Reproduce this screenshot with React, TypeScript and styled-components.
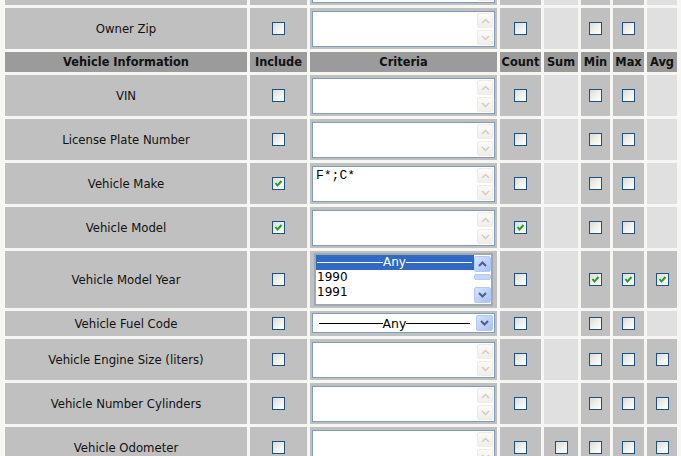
import React from 'react';
import styled, { createGlobalStyle } from 'styled-components';

const Global = createGlobalStyle`
  html, body { margin: 0; padding: 0; background: #f6f6f2; overflow: hidden; }
`;

const Page = styled.div`
  padding-left: 2px;
  margin-top: -39px;
`;

const Table = styled.table`
  border-collapse: separate;
  border-spacing: 3px;
  table-layout: fixed;
  width: 678px;
  font-family: "DejaVu Sans", Verdana, sans-serif;
  font-size: 11.7px;
  color: #111;
`;

const Col = styled.col<{ $w: number }>`
  width: ${(p) => p.$w}px;
`;

const Row = styled.tr<{ $h: number }>`
  height: ${(p) => p.$h}px;
`;

const HeadCell = styled.th`
  background: #9b9b9b;
  font-weight: bold;
  font-size: 11.4px;
  text-align: center;
  vertical-align: middle;
  padding: 0;
  color: #111;
  white-space: nowrap;
`;

const LabelCell = styled.td`
  background: #c0c0c0;
  text-align: center;
  vertical-align: middle;
  padding: 0;
  white-space: nowrap;
`;

const CheckCell = styled.td<{ $empty?: boolean }>`
  background: ${(p) => (p.$empty ? '#e0e0e0' : '#c0c0c0')};
  vertical-align: middle;
  padding: 0;
`;

const CriteriaCell = styled.td<{ $pad: string }>`
  background: #c0c0c0;
  vertical-align: top;
  padding: ${(p) => p.$pad};
`;

const Box = styled.span`
  display: block;
  margin: 0 auto;
  width: 13px;
  height: 13px;
  box-sizing: border-box;
  border: 1px solid #1c5180;
  background: linear-gradient(135deg, #dcdcd7 0%, #f4f4f0 60%, #ffffff 100%);
  position: relative;
`;

const CheckSvg = styled.svg`
  position: absolute;
  left: 0;
  top: 0;
`;

const Checkbox = ({ checked }: { checked?: boolean }) => (
  <Box>
    {checked && (
      <CheckSvg width="11" height="11" viewBox="0 0 11 11">
        <polyline points="2.5,5 4.5,7.5 8.5,3" fill="none" stroke="#21a121" strokeWidth="2" />
      </CheckSvg>
    )}
  </Box>
);

const TextBox = styled.div`
  height: 36px;
  box-sizing: border-box;
  border: 1px solid #7f9db9;
  background: #fff;
  display: flex;
`;

const TextContent = styled.div`
  flex: 1;
  padding: 2px 3px;
  font-family: "Liberation Mono", "Courier New", monospace;
  font-size: 13px;
  line-height: 14px;
  color: #000;
`;

const ScrollBar = styled.div`
  width: 17px;
  display: flex;
  flex-direction: column;
  gap: 2px;
  padding: 1px 1px 1px 0;
  box-sizing: border-box;
`;

const DisabledBtn = styled.div`
  flex: 1;
  border: 1px solid #eeede5;
  border-radius: 2px;
  background: linear-gradient(180deg, #fbfbf8, #f0efe8);
  display: flex;
  align-items: center;
  justify-content: center;
`;

const BlueBtn = styled.div<{ $h?: number }>`
  height: ${(p) => (p.$h ? `${p.$h}px` : 'auto')};
  width: 17px;
  flex: ${(p) => (p.$h ? 'none' : '1')};
  box-sizing: border-box;
  border: 1px solid #b4c8f6;
  border-radius: 2px;
  background: linear-gradient(135deg, #d6e3fe 0%, #c0d3fb 50%, #a7bff2 100%);
  display: flex;
  align-items: center;
  justify-content: center;
`;

const Chevron = ({ up, color, w = 2 }: { up?: boolean; color: string; w?: number }) => (
  <svg width="9" height="6" viewBox="0 0 9 6">
    <polyline
      points={up ? '1,5 4.5,1.5 8,5' : '1,1 4.5,4.5 8,1'}
      fill="none"
      stroke={color}
      strokeWidth={w}
    />
  </svg>
);

const TextArea = ({ value }: { value?: string }) => (
  <TextBox>
    <TextContent>{value}</TextContent>
    <ScrollBar>
      <DisabledBtn>
        <Chevron up color="#cfcec6" w={1.5} />
      </DisabledBtn>
      <DisabledBtn>
        <Chevron color="#cfcec6" w={1.5} />
      </DisabledBtn>
    </ScrollBar>
  </TextBox>
);

const ListBox = styled.div`
  height: 53px;
  margin: 0 2px 0 2px;
  box-sizing: border-box;
  border: 2px solid #a0a8b2;
  background: #fff;
  display: flex;
  overflow: hidden;
`;

const Options = styled.div`
  flex: 1;
  display: flex;
  flex-direction: column;
  font-family: "DejaVu Sans", Tahoma, sans-serif;
  font-size: 12px;
  color: #000;
`;

const Option = styled.div<{ $sel?: boolean }>`
  height: 15px;
  line-height: 15px;
  padding: 0 2px 0 1px;
  background: ${(p) => (p.$sel ? '#316ac5' : 'transparent')};
  color: ${(p) => (p.$sel ? '#fff' : '#000')};
  display: flex;
  align-items: center;
`;

const Rule = styled.span<{ $c: string }>`
  flex: 1;
  height: 0;
  border-top: 1px solid ${(p) => p.$c};
`;

const ListScroll = styled.div`
  width: 17px;
  display: flex;
  flex-direction: column;
  gap: 1px;
  padding: 1px 0 1px 0;
  box-sizing: border-box;
`;

const Thumb = styled.div`
  height: 6px;
  box-sizing: border-box;
  border: 1px solid #b4c8f6;
  border-radius: 2px;
  background: #c8d6fb;
  margin-top: 1px;
`;

const Gap = styled.div`
  flex: 1;
`;

const SelectBox = styled.div`
  height: 20px;
  box-sizing: border-box;
  border: 1px solid #7f9db9;
  background: #fff;
  display: flex;
  padding: 1px;
`;

const SelectValue = styled.div`
  flex: 1;
  display: flex;
  align-items: center;
  padding: 0 6px 0 5px;
  font-family: "DejaVu Sans", Tahoma, sans-serif;
  font-size: 12.5px;
  color: #000;
`;

const AnyText = styled.span`
  padding: 0;
`;

type Kind = 'text' | 'list' | 'select';
type RowData = {
  label: string;
  include?: boolean;
  kind: Kind;
  value?: string;
  count?: boolean;
  sum?: boolean | null;
  min?: boolean | null;
  max?: boolean | null;
  avg?: boolean | null;
  h: number;
};

const before: RowData[] = [
  { label: '', kind: 'text', count: false, sum: null, min: false, max: false, avg: null, h: 41 },
  { label: 'Owner Zip', kind: 'text', count: false, sum: null, min: false, max: false, avg: null, h: 41 },
];

const after: RowData[] = [
  { label: 'VIN', kind: 'text', count: false, sum: null, min: false, max: false, avg: null, h: 41 },
  { label: 'License Plate Number', kind: 'text', count: false, sum: null, min: false, max: false, avg: null, h: 41 },
  { label: 'Vehicle Make', include: true, kind: 'text', value: 'F*;C*', count: false, sum: null, min: false, max: false, avg: null, h: 41 },
  { label: 'Vehicle Model', include: true, kind: 'text', count: true, sum: null, min: false, max: false, avg: null, h: 41 },
  { label: 'Vehicle Model Year', kind: 'list', count: false, sum: null, min: true, max: true, avg: true, h: 57 },
  { label: 'Vehicle Fuel Code', kind: 'select', count: false, sum: null, min: false, max: false, avg: null, h: 25 },
  { label: 'Vehicle Engine Size (liters)', kind: 'text', count: false, sum: null, min: false, max: false, avg: false, h: 41 },
  { label: 'Vehicle Number Cylinders', kind: 'text', count: false, sum: null, min: false, max: false, avg: false, h: 41 },
  { label: 'Vehicle Odometer', kind: 'text', count: false, sum: false, min: false, max: false, avg: false, h: 41 },
];

const AnyLine = ({ c }: { c: string }) => (
  <>
    <Rule $c={c} />
    <AnyText>Any</AnyText>
    <Rule $c={c} />
  </>
);

const Criteria = ({ r }: { r: RowData }) => {
  if (r.kind === 'list') {
    return (
      <CriteriaCell $pad="2px 2px 0 2px">
        <ListBox>
          <Options>
            <Option $sel>
              <AnyLine c="#fff" />
            </Option>
            <Option>1990</Option>
            <Option>1991</Option>
          </Options>
          <ListScroll>
            <BlueBtn $h={16}>
              <Chevron up color="#4d6185" />
            </BlueBtn>
            <Thumb />
            <Gap />
            <BlueBtn $h={16}>
              <Chevron color="#4d6185" />
            </BlueBtn>
          </ListScroll>
        </ListBox>
      </CriteriaCell>
    );
  }
  if (r.kind === 'select') {
    return (
      <CriteriaCell $pad="2px 2px 0 2px">
        <SelectBox>
          <SelectValue>
            <AnyLine c="#000" />
          </SelectValue>
          <BlueBtn $h={16}>
            <Chevron color="#4d6185" />
          </BlueBtn>
        </SelectBox>
      </CriteriaCell>
    );
  }
  return (
    <CriteriaCell $pad="3px 2px 0 2px">
      <TextArea value={r.value} />
    </CriteriaCell>
  );
};

const Agg = ({ v }: { v?: boolean | null }) =>
  v === null || v === undefined ? <CheckCell $empty /> : (
    <CheckCell>
      <Checkbox checked={v} />
    </CheckCell>
  );

const DataRow = ({ r }: { r: RowData }) => (
  <Row $h={r.h}>
    <LabelCell>{r.label}</LabelCell>
    <CheckCell>
      <Checkbox checked={r.include} />
    </CheckCell>
    <Criteria r={r} />
    <CheckCell>
      <Checkbox checked={r.count} />
    </CheckCell>
    <Agg v={r.sum} />
    <Agg v={r.min} />
    <Agg v={r.max} />
    <Agg v={r.avg} />
  </Row>
);

export default function App() {
  return (
    <>
      <Global />
      <Page>
        <Table>
          <colgroup>
            <Col $w={242} />
            <Col $w={57} />
            <Col $w={187} />
            <Col $w={41} />
            <Col $w={34} />
            <Col $w={29} />
            <Col $w={31} />
            <Col $w={30} />
          </colgroup>
          <tbody>
            {before.map((r, i) => (
              <DataRow key={i} r={r} />
            ))}
            <Row $h={20}>
              <HeadCell>Vehicle Information</HeadCell>
              <HeadCell>Include</HeadCell>
              <HeadCell>Criteria</HeadCell>
              <HeadCell>Count</HeadCell>
              <HeadCell>Sum</HeadCell>
              <HeadCell>Min</HeadCell>
              <HeadCell>Max</HeadCell>
              <HeadCell>Avg</HeadCell>
            </Row>
            {after.map((r) => (
              <DataRow key={r.label} r={r} />
            ))}
          </tbody>
        </Table>
      </Page>
    </>
  );
}
